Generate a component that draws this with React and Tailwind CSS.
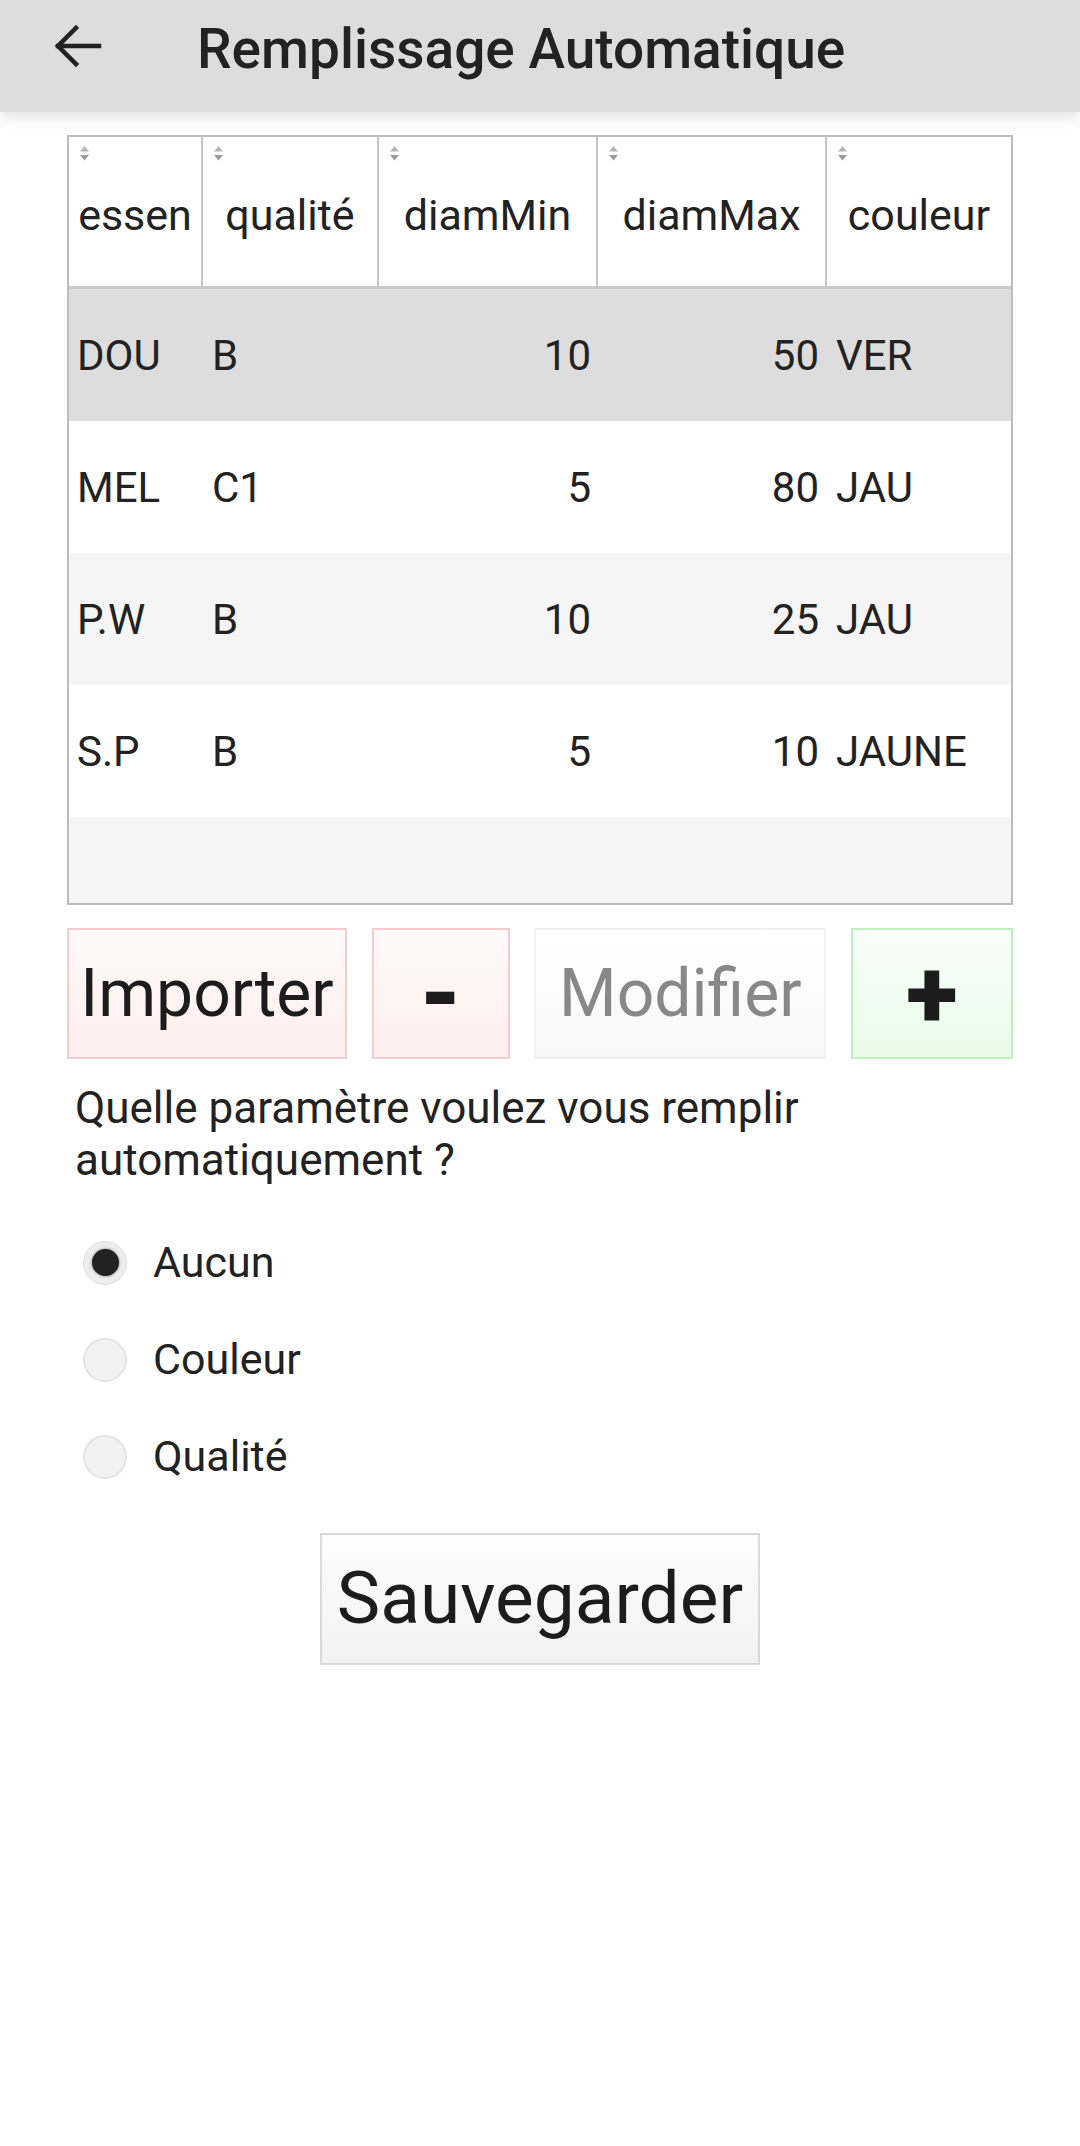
import React, { useState } from "react";

const rows = [
  { essen: "DOU", qualite: "B", min: "10", max: "50", couleur: "VER" },
  { essen: "MEL", qualite: "C1", min: "5", max: "80", couleur: "JAU" },
  { essen: "P.W", qualite: "B", min: "10", max: "25", couleur: "JAU" },
  { essen: "S.P", qualite: "B", min: "5", max: "10", couleur: "JAUNE" },
];

const headers = ["essen", "qualité", "diamMin", "diamMax", "couleur"];

function SortIcon() {
  return (
    <svg width="11" height="17" viewBox="0 0 11 17" className="absolute left-[10px] top-[8px]">
      <path d="M1 6.5 L5.5 1 L10 6.5 Z" fill="#b5b5b5" />
      <path d="M1 10 L10 10 L5.5 15.5 Z" fill="#9a9a9a" />
    </svg>
  );
}

function Radio({ checked, label, onClick }) {
  return (
    <div className="flex items-center h-[97px] pl-[16px] cursor-pointer" onClick={onClick}>
      <div
        className={
          checked
            ? "w-[44px] h-[44px] rounded-full bg-[#ededed] border border-[#dedede] flex items-center justify-center"
            : "w-[44px] h-[44px] rounded-full bg-[#f2f2f2] border-2 border-[#e3e3e3]"
        }
      >
        {checked && <div className="w-[27px] h-[27px] rounded-full bg-[#222] shadow-[0_0_3px_rgba(0,0,0,0.5)]" />}
      </div>
      <span className="ml-[26px] text-[43px] text-[#222]">{label}</span>
    </div>
  );
}

export default function App() {
  const [choice, setChoice] = useState("Aucun");
  const [selected, setSelected] = useState(0);

  return (
    <div className="w-[1080px] min-h-[2146px] bg-white" style={{ fontFamily: "Roboto, 'Noto Sans', sans-serif" }}>
      {/* toolbar */}
      <div className="relative z-10 h-[112px] bg-[#dddddd] shadow-[0_5px_14px_rgba(0,0,0,0.12)] flex items-start">
        <svg width="48" height="48" viewBox="0 0 48 48" className="ml-[54px] mt-[22px]" fill="none" stroke="#222" strokeWidth="4.5" strokeLinecap="square">
          <path d="M4 24 L45 24" />
          <path d="M22 6 L4 24 L22 42" strokeLinejoin="miter" />
        </svg>
        <h1 className="ml-[95px] mt-[22px] text-[55px] leading-[55px] font-medium text-[#222]">
          Remplissage Automatique
        </h1>
      </div>

      <div className="px-[67px] pt-[23px]">
        {/* table */}
        <div className="w-[946px] h-[770px] border-2 border-[#bdbdbd] overflow-hidden">
          <div className="grid grid-cols-[134px_176px_219px_229px_184px] h-[152px] border-b-[3px] border-[#cacaca]">
            {headers.map((h, i) => (
              <div
                key={h}
                className={
                  "relative flex items-center justify-center text-[43px] text-[#222] pt-[8px] " +
                  (i < 4 ? "border-r-2 border-[#c6c6c6]" : "")
                }
              >
                <SortIcon />
                {h}
              </div>
            ))}
          </div>
          {rows.map((r, i) => (
            <div
              key={r.essen}
              onClick={() => setSelected(i)}
              className={
                "grid grid-cols-[134px_176px_219px_229px_184px] h-[132px] items-center text-[42px] text-[#222] " +
                (i === selected ? "bg-[#dddddd]" : i % 2 === 1 ? "bg-white" : "bg-[#f5f5f5]")
              }
            >
              <div className="pl-[8px]">{r.essen}</div>
              <div className="pl-[9px]">{r.qualite}</div>
              <div className="pr-[7px] text-right">{r.min}</div>
              <div className="pr-[8px] text-right">{r.max}</div>
              <div className="pl-[9px] whitespace-nowrap">{r.couleur}</div>
            </div>
          ))}
          <div className="h-[132px] bg-[#f5f5f5]" />
        </div>

        {/* actions */}
        <div className="mt-[23px] flex justify-between h-[131px]">
          <button className="w-[280px] h-full border-2 border-[#f3cccc] bg-gradient-to-b from-[#fff9f9] to-[#fdeeee] text-[66px] text-[#1c1c1c] flex items-center justify-center">
            Importer
          </button>
          <button className="w-[138px] h-full border-2 border-[#f3cccc] bg-gradient-to-b from-[#fff9f9] to-[#fdeeee] text-[96px] font-black leading-none text-[#1c1c1c] flex items-center justify-center">
            -
          </button>
          <button className="w-[292px] h-full border-2 border-[#f0f0f0] bg-gradient-to-b from-[#ffffff] to-[#f8f8f8] text-[66px] text-[#888888] flex items-center justify-center">
            Modifier
          </button>
          <button className="w-[162px] h-full border-2 border-[#bfeebf] bg-gradient-to-b from-[#f7fff7] to-[#e9fbe9] text-[96px] font-black leading-none text-[#1c1c1c] flex items-center justify-center">
            +
          </button>
        </div>

        {/* question */}
        <p className="mt-[23px] pl-[8px] text-[44px] leading-[52px] text-[#222]">
          Quelle paramètre voulez vous remplir automatiquement ?
        </p>

        <div className="mt-[28px]">
          {["Aucun", "Couleur", "Qualité"].map((o) => (
            <Radio key={o} label={o} checked={choice === o} onClick={() => setChoice(o)} />
          ))}
        </div>

        <div className="mt-[28px] flex justify-center">
          <button className="w-[440px] h-[132px] border-2 border-[#d9d9d9] bg-gradient-to-b from-[#fdfdfd] to-[#f2f2f2] text-[73px] text-[#1c1c1c] flex items-center justify-center">
            Sauvegarder
          </button>
        </div>
      </div>
    </div>
  );
}
